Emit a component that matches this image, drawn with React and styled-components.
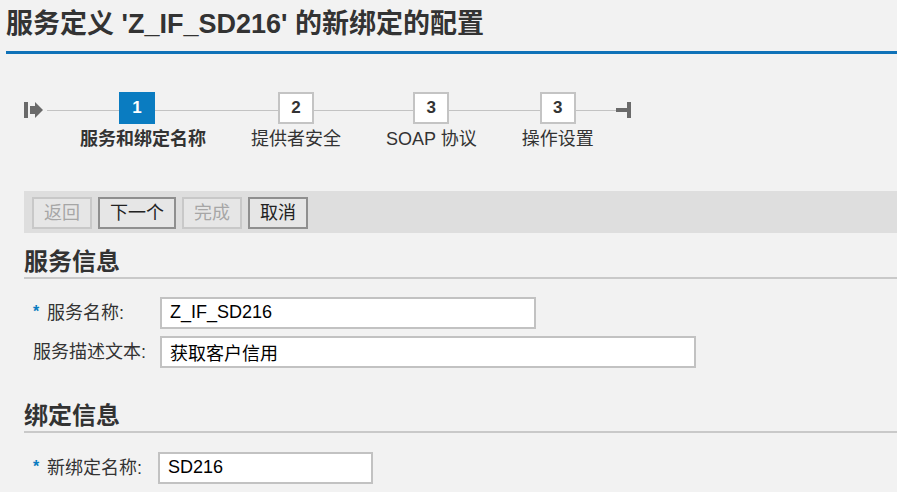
import React from 'react';
import styled, { createGlobalStyle } from 'styled-components';

const FONT = `"Liberation Sans", "Noto Sans CJK SC", sans-serif`;

const Global = createGlobalStyle`
  html, body { margin: 0; padding: 0; background: #f2f2f2; }
  body { font-family: ${FONT}; color: #333; }
`;

const Page = styled.div`
  width: 897px;
  height: 492px;
  overflow: hidden;
  background: #f2f2f2;
`;

const Title = styled.h1`
  margin: 0 0 0 6px;
  padding: 8px 0 11px;
  font-size: 27px;
  line-height: 32px;
  font-weight: bold;
  color: #333;
  white-space: nowrap;
  border-bottom: 3px solid #0f72b8;
`;

const Steps = styled.div`
  display: flex;
  align-items: flex-start;
  margin: 38px 0 0 24px;
`;

const EdgeIcon = styled.svg`
  display: block;
  margin-top: 10px;
  flex: none;
`;

const Track = styled.div`
  display: flex;
  width: 569px;
  margin-left: 4px;
  padding-left: 10.5px;
  box-sizing: border-box;
  background: linear-gradient(#c3c3c3, #c3c3c3) no-repeat 0 18px / 100% 1px;
`;

const Step = styled.div`
  display: flex;
  flex-direction: column;
  align-items: center;
  padding: 0 22.5px;
`;

const StepBox = styled.div`
  width: 36px;
  height: 32px;
  box-sizing: border-box;
  display: flex;
  align-items: center;
  justify-content: center;
  margin-right: ${(p) => p.$shift || 0}px;
  font-size: 17px;
  font-weight: bold;
  background: ${(p) => (p.$active ? '#0a7cc1' : '#fff')};
  border: 2px solid ${(p) => (p.$active ? '#0a7cc1' : '#c4c4c4')};
  color: ${(p) => (p.$active ? '#fff' : '#333')};
`;

const StepLabel = styled.div`
  margin-top: 4px;
  font-size: 18px;
  line-height: 22px;
  white-space: nowrap;
  color: #333;
  font-weight: ${(p) => (p.$active ? 'bold' : 'normal')};
`;

const Toolbar = styled.div`
  display: flex;
  gap: 6px;
  margin: 41px 0 0 24px;
  padding: 6px 8px 4px;
  background: #dedede;
`;

const Button = styled.button`
  height: 32px;
  box-sizing: border-box;
  margin: 0;
  padding: 0 10px;
  border-radius: 0;
  border: 2px solid ${(p) => (p.disabled ? '#c8c8c8' : '#8f8f8f')};
  background: #e6e6e6;
  font-family: ${FONT};
  font-size: 18px;
  line-height: 28px;
  color: ${(p) => (p.disabled ? '#a6a6a6' : '#222')};
`;

const SectionTitle = styled.h2`
  margin: ${(p) => p.$top}px 0 0 24px;
  padding: 0 0 1px;
  font-size: 24px;
  line-height: 28px;
  font-weight: bold;
  color: #333;
  border-bottom: 2px solid #c9c9c9;
`;

const Form = styled.div`
  display: flex;
  flex-direction: column;
  gap: 7px;
  margin: ${(p) => p.$top}px 0 0 33px;
`;

const Row = styled.div`
  display: flex;
  align-items: center;
`;

const Label = styled.label`
  width: ${(p) => p.$w}px;
  flex: none;
  font-size: 18px;
  line-height: 32px;
  color: #333;
  white-space: nowrap;
`;

const Star = styled.span`
  display: inline-block;
  width: 14px;
  color: #0a7cc1;
  font-weight: bold;
  font-size: 16px;
  vertical-align: 2px;
`;

const Field = styled.input`
  width: ${(p) => p.$w}px;
  height: 32px;
  box-sizing: border-box;
  margin: 0;
  padding: 0 8px;
  border: 2px solid #c2c2c2;
  border-radius: 0;
  background: #fff;
  font-family: ${FONT};
  font-size: 18px;
  color: #000;
  outline: none;
`;

const steps = [
  { n: '1', label: '服务和绑定名称', active: true, shift: 12 },
  { n: '2', label: '提供者安全' },
  { n: '3', label: 'SOAP 协议' },
  { n: '3', label: '操作设置' },
];

export default function App() {
  return (
    <Page>
      <Global />
      <Title>服务定义 'Z_IF_SD216' 的新绑定的配置</Title>

      <Steps>
        <EdgeIcon width="19" height="16" viewBox="0 0 19 16">
          <rect x="0" y="0" width="4" height="16" fill="#6a6a6a" />
          <polygon points="6,4 11,4 11,0 19,8 11,16 11,12 6,12" fill="#6a6a6a" />
        </EdgeIcon>
        <Track>
          {steps.map((s, i) => (
            <Step key={i}>
              <StepBox $active={s.active} $shift={s.shift}>{s.n}</StepBox>
              <StepLabel $active={s.active}>{s.label}</StepLabel>
            </Step>
          ))}
        </Track>
        <EdgeIcon width="15" height="16" viewBox="0 0 15 16">
          <rect x="0" y="6" width="11" height="4" fill="#6a6a6a" />
          <rect x="11" y="0" width="4" height="16" fill="#6a6a6a" />
        </EdgeIcon>
      </Steps>

      <Toolbar>
        <Button disabled>返回</Button>
        <Button>下一个</Button>
        <Button disabled>完成</Button>
        <Button>取消</Button>
      </Toolbar>

      <SectionTitle $top={15}>服务信息</SectionTitle>
      <Form $top={17}>
        <Row>
          <Label $w={127}><Star>*</Star>服务名称:</Label>
          <Field $w={376} readOnly value="Z_IF_SD216" />
        </Row>
        <Row>
          <Label $w={127}>服务描述文本:</Label>
          <Field $w={536} readOnly value="获取客户信用" />
        </Row>
      </Form>

      <SectionTitle $top={34}>绑定信息</SectionTitle>
      <Form $top={18}>
        <Row>
          <Label $w={125}><Star>*</Star>新绑定名称:</Label>
          <Field $w={215} readOnly value="SD216" />
        </Row>
      </Form>
    </Page>
  );
}
